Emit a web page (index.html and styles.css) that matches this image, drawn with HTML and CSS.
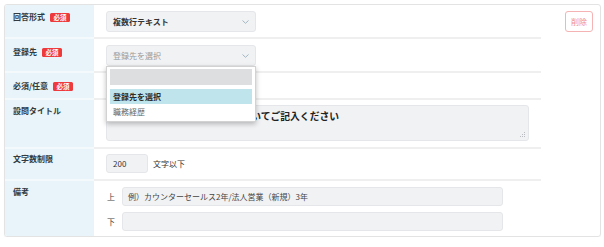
FILE: index.html
```html
<!DOCTYPE html>
<html lang="ja">
<head>
<meta charset="utf-8">
<link rel="stylesheet" href="styles.css">
</head>
<body>
<div class="card">
  <div class="form">
    <div class="row r1">
      <div class="label"><span>回答形式</span><span class="req">必須</span></div>
      <div class="field">
        <div class="select"><span class="sel-text">複数行テキスト</span>
          <svg class="chev" width="7" height="4" viewBox="0 0 7 4"><path d="M0.5 0.5 L3.5 3.3 L6.5 0.5" fill="none" stroke="#a3b6c2" stroke-width="1"/></svg>
        </div>
      </div>
    </div>
    <div class="row r2">
      <div class="label"><span>登録先</span><span class="req">必須</span></div>
      <div class="field">
        <div class="select-wrap">
          <div class="select"><span class="sel-text placeholder">登録先を選択</span>
            <svg class="chev" width="7" height="4" viewBox="0 0 7 4"><path d="M0.5 0.5 L3.5 3.3 L6.5 0.5" fill="none" stroke="#a3b6c2" stroke-width="1"/></svg>
          </div>
          <div class="dropdown">
            <div class="search"></div>
            <ul class="options">
              <li class="opt active">登録先を選択</li>
              <li class="opt">職務経歴</li>
            </ul>
          </div>
        </div>
      </div>
    </div>
    <div class="row r3">
      <div class="label"><span>必須/任意</span><span class="req">必須</span></div>
      <div class="field"></div>
    </div>
    <div class="row r4">
      <div class="label"><span>設問タイトル</span></div>
      <div class="field">
        <div class="textarea"><span class="ta-hidden">これまでのご経験やスキルにつ</span><span class="ta-text">いてご記入ください</span>
          <svg class="grip" width="6" height="6" viewBox="0 0 6 6"><g fill="#b9bcc0"><rect x="4" y="0" width="1" height="1"/><rect x="2" y="2" width="1" height="1"/><rect x="4" y="2" width="1" height="1"/><rect x="0" y="4" width="1" height="1"/><rect x="2" y="4" width="1" height="1"/><rect x="4" y="4" width="1" height="1"/></g></svg>
        </div>
      </div>
    </div>
    <div class="row r5">
      <div class="label"><span>文字数制限</span></div>
      <div class="field inline">
        <div class="input short">200</div>
        <span class="unit">文字以下</span>
      </div>
    </div>
    <div class="row r6">
      <div class="label"><span>備考</span></div>
      <div class="field stack">
        <div class="line"><span class="pre">上</span><div class="input wide">例）カウンターセールス2年/法人営業（新規）3年</div></div>
        <div class="line"><span class="pre">下</span><div class="input wide"></div></div>
      </div>
    </div>
  </div>
  <div class="side">
    <button class="del">削除</button>
  </div>
</div>
</body>
</html>
```

FILE: styles.css
```css
* { box-sizing: border-box; }
html, body { margin: 0; padding: 0; background: #fff; }
body {
  font-family: "Noto Sans CJK JP", "Noto Sans", sans-serif;
  font-size: 8px;
  color: #333;
}
.card {
  margin: 4px 0 0 4px;
  width: 597px;
  height: 233px;
  border: 1px solid #e3e3e3;
  border-radius: 3px;
  box-shadow: 0 1px 1px rgba(0,0,0,0.05);
  display: flex;
  overflow: hidden;
}
.form {
  width: 536px;
  display: flex;
  flex-direction: column;
}
.row {
  display: grid;
  grid-template-columns: 89px 1fr;
}
.r1 { height: 34px; }
.r2 { height: 34px; }
.r3 { height: 27px; }
.r4 { height: 49px; }
.r5 { height: 32px; }
.r6 { flex: 1; }
.label {
  background: #e8f4f9;
  border-bottom: 2px solid #f4f9fc;
  padding: 6px 0 0 8px;
  display: flex;
  align-items: flex-start;
  gap: 5px;
  font-weight: 700;
  line-height: 12px;
  color: #333a40;
}
.r6 .label { border-bottom: none; }
.r5 .label { padding-top: 4px; }
.r4 .label, .r6 .label { padding-top: 5px; }
.r2 .label, .r3 .label { padding-top: 7px; }
.req {
  display: inline-block;
  width: 20px;
  height: 9px;
  margin-top: 1.5px;
  background: #ef3a3d;
  color: #fff;
  border-radius: 1.5px;
  font-size: 6.5px;
  line-height: 9px;
  text-align: center;
  font-weight: 700;
}
.field {
  border-bottom: 2px solid #efefef;
  padding: 6px 0 0 12px;
}
.r6 .field { border-bottom: none; }
.r4 .field, .r5 .field { padding-top: 5px; }
.select-wrap {
  position: relative;
  width: 150px;
}
.select {
  width: 150px;
  height: 21px;
  border: 1px solid #e4e6e9;
  border-radius: 3px;
  background: #f1f2f4;
  display: flex;
  align-items: center;
  justify-content: space-between;
  padding: 0 6px 0 6px;
}
.sel-text { font-weight: 700; color: #333; }
.sel-text.placeholder { font-weight: 400; color: #9a9a9a; }
.dropdown {
  position: absolute;
  top: 100%;
  left: 0;
  width: 150px;
  background: #fff;
  border: 1px solid #d2d2d2;
  box-shadow: 0 2px 5px rgba(0,0,0,0.25);
  padding: 2px 3px 2px;
  z-index: 5;
}
.search {
  height: 16px;
  background: #dcdee0;
}
.options {
  list-style: none;
  margin: 4px 0 0;
  padding: 0;
}
.opt {
  height: 15px;
  line-height: 15px;
  padding-left: 3px;
  color: #666;
}
.opt.active {
  background: #c0e4eb;
  color: #2b2b2b;
  font-weight: 700;
}
.textarea {
  position: relative;
  width: 423px;
  height: 36px;
  border: 1px solid #e4e6e9;
  border-radius: 3px;
  background: #f1f2f4;
  padding: 3px 7px;
  font-size: 9.8px;
  line-height: 14px;
  font-weight: 700;
  color: #222;
  white-space: nowrap;
}
.ta-hidden { visibility: hidden; }
.grip { position: absolute; right: 2px; bottom: 2px; }
.inline { display: flex; align-items: flex-start; gap: 5px; }
.input {
  height: 19px;
  border: 1px solid #e4e6e9;
  border-radius: 3px;
  background: #f1f2f4;
  line-height: 17px;
  color: #333;
}
.short { width: 42px; padding: 0 6px; }
.unit { line-height: 19px; }
.stack { display: flex; flex-direction: column; gap: 6px; padding-left: 13px; }
.line { display: flex; align-items: center; gap: 7px; }
.pre { width: 8px; color: #444; }
.wide { width: 381px; padding: 0 5px; color: #444; }
.side {
  flex: 1;
  display: flex;
  justify-content: flex-end;
  align-items: flex-start;
  padding: 6px 7px 0 0;
}
.del {
  width: 28px;
  height: 21px;
  padding: 0;
  border: 1px solid #f5b3b3;
  border-radius: 3px;
  background: #fff;
  color: #f08a8a;
  font-family: "Noto Sans CJK JP", sans-serif;
  font-size: 8px;
  line-height: 19px;
}
```
